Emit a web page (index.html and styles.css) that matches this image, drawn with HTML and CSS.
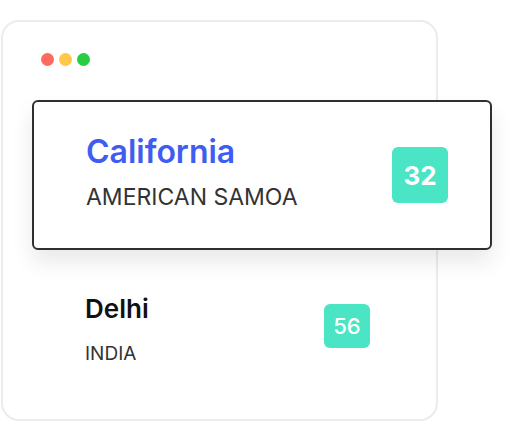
FILE: index.html
```html
<!DOCTYPE html>
<html>
<head>
    <meta charset="UTF-8">
    <title>Locations</title>
    <link rel="stylesheet" href="styles.css">
</head>
<body>
<div class="window">
    <ul class="dots">
        <li class="dot red"></li>
        <li class="dot yellow"></li>
        <li class="dot green"></li>
    </ul>

    <!-- selected row, pulled out of the window -->
    <div class="card">
        <div class="place">
            <div class="city">California</div>
            <div class="country">AMERICAN SAMOA</div>
        </div>
        <span class="badge">32</span>
    </div>

    <div class="row">
        <div class="place">
            <div class="city">Delhi</div>
            <div class="country">INDIA</div>
        </div>
        <span class="badge">56</span>
    </div>
</div>
</body>
</html>
```

FILE: styles.css
```css
body {
    margin: 0;
    background: #fff;
    font-family: Inter, "Liberation Sans", sans-serif;
}

ul {
    margin: 0;
    padding: 0;
    list-style: none;
}

.window {
    width: 437px;
    height: 401px;
    box-sizing: border-box;
    margin: 20px 0 0 1px;
    border: 2px solid #ececec;
    border-radius: 18px;
    background: #fff;
}

.dots {
    display: flex;
    gap: 5px;
    padding: 31px 0 0 38px;
}

.dot {
    width: 13px;
    height: 13px;
    border-radius: 50%;
}

.red {
    background: #ff6a5f;
}

.yellow {
    background: #ffc84a;
}

.green {
    background: #29cc42;
}

.card {
    width: 460px;
    height: 150px;
    box-sizing: border-box;
    margin: 34px 0 0 29px;
    padding: 0 42px 0 52px;
    border: 2px solid #2f2f2f;
    border-radius: 6px;
    background: #fff;
    box-shadow: 0 12px 22px rgba(0, 0, 0, 0.09);
    display: flex;
    align-items: center;
    justify-content: space-between;
    position: relative;
}

.card .place {
    padding-bottom: 6px;
}

.card .city {
    color: #3f5df2;
    font-size: 32px;
    font-weight: 600;
    line-height: 32px;
}

.card .country {
    margin-top: 18px;
    color: #333;
    font-size: 23px;
    line-height: 23px;
}

.badge {
    border-radius: 6px;
    background: #4ae5c4;
    color: #fff;
    font-weight: 700;
    display: flex;
    align-items: center;
    justify-content: center;
}

.card .badge {
    width: 56px;
    height: 56px;
    font-size: 26px;
}

.row {
    width: 367px;
    box-sizing: border-box;
    margin-top: 46px;
    padding-left: 82px;
    display: flex;
    align-items: flex-start;
    justify-content: space-between;
}

.row .city {
    color: #111;
    font-size: 26px;
    font-weight: 600;
    line-height: 26px;
}

.row .country {
    margin-top: 22px;
    color: #333;
    font-size: 19px;
    line-height: 19px;
}

.row .badge {
    width: 46px;
    height: 44px;
    margin-top: 8px;
    font-size: 22px;
    font-weight: 500;
}
```
